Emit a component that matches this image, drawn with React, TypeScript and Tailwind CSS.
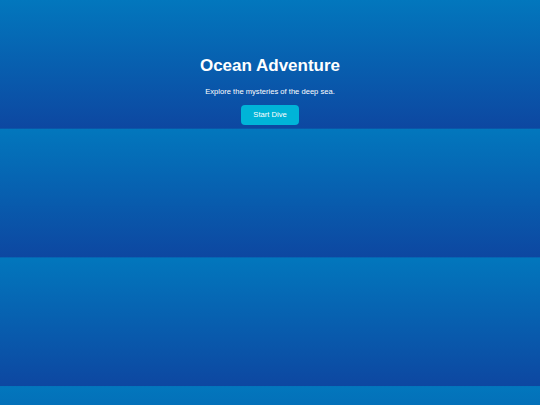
import React from "react";

export default function App() {
  return (
    <div
      className="w-[540px] h-[405px] bg-[linear-gradient(to_bottom,#0277bd,#0d47a1)] bg-[length:100%_128.7px] bg-repeat-y"
      style={{ fontFamily: '"Liberation Sans", Arial, sans-serif' }}
    >
      <div className="flex flex-col items-center pt-[56px] text-white">
        <h1 className="text-[17px] leading-[20px] font-bold">Ocean Adventure</h1>
        <p className="mt-[11px] text-[7.6px] leading-[9px]">Explore the mysteries of the deep sea.</p>
        <button className="mt-[9px] h-[20px] w-[58px] rounded-[4px] bg-[#00b4d8] text-[7.6px] text-white">
          Start Dive
        </button>
      </div>
    </div>
  );
}
